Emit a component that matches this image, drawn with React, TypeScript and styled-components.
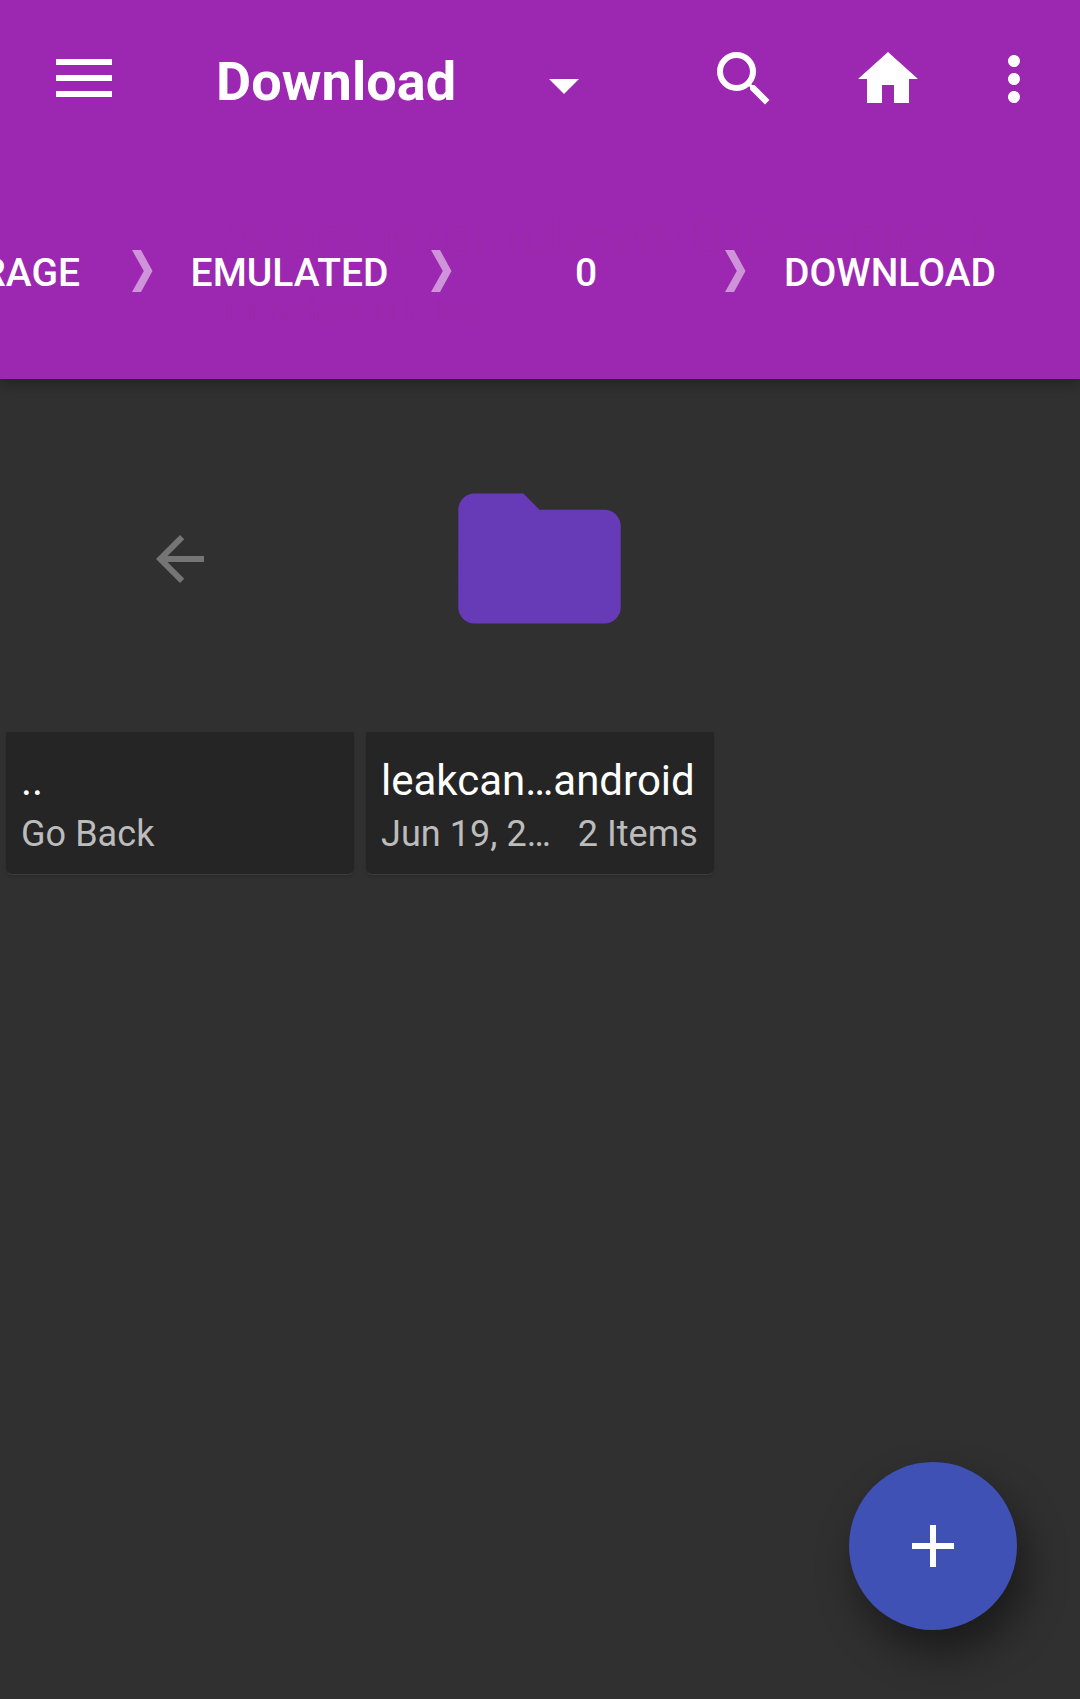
import React from "react";
import styled, { createGlobalStyle } from "styled-components";

const GlobalStyle = createGlobalStyle`
  * { box-sizing: border-box; }
  html, body { margin: 0; padding: 0; background: #303030; }
  body { font-family: Roboto, "Noto Sans", sans-serif; overflow: hidden; }
`;

const Screen = styled.div`
  position: relative;
  width: 1080px;
  height: 1699px;
  display: flex;
  flex-direction: column;
  background: #303030;
  overflow: hidden;
`;

const Header = styled.header`
  position: relative;
  z-index: 0;
  flex: none;
  height: 379px;
  display: flex;
  flex-direction: column;
  background: #9c27b0;
  color: #fff;
  box-shadow: 0 5px 12px rgba(0, 0, 0, 0.27);
`;

const Toolbar = styled.div`
  height: 158px;
  display: flex;
  align-items: center;
  padding: 0 30px 0 56px;
`;

const IconButton = styled.button<{ $gap?: number; $size?: number }>`
  width: ${(p) => p.$size ?? 72}px;
  height: 72px;
  margin: 0 0 0 ${(p) => p.$gap ?? 0}px;
  padding: 0;
  border: 0;
  background: none;
  color: inherit;
  display: flex;
  align-items: center;
  justify-content: center;
`;

const MenuGlyph = styled.svg`
  display: block;
  margin-bottom: 2px;
`;

const Picker = styled.div`
  flex: 1;
  display: flex;
  align-items: center;
  margin-left: 104px;
`;

const Title = styled.h1`
  width: 312px;
  margin: 0;
  padding-top: 5px;
  font-size: 54px;
  line-height: 64px;
  font-weight: 700;
  letter-spacing: 0.1px;
  white-space: nowrap;
`;

const Caret = styled.svg`
  margin-top: 11px;
  display: block;
`;

const Breadcrumbs = styled.nav`
  height: 168px;
  margin-top: 30px;
  display: flex;
  align-items: center;
`;

const Crumb = styled.span<{ $width: number; $align?: string; $end?: number }>`
  flex: none;
  width: ${(p) => p.$width}px;
  padding-top: 2px;
  padding-right: ${(p) => p.$end ?? 0}px;
  display: flex;
  justify-content: ${(p) => p.$align ?? "center"};
  font-size: 39px;
  line-height: 46px;
  font-weight: 500;
  white-space: nowrap;
`;

const Separator = styled.svg`
  flex: none;
  display: block;
  margin-top: -2px;
`;

const PathInfo = styled.div`
  position: absolute;
  z-index: -1;
  left: 218px;
  top: 205px;
  color: #9b28ad;
`;

const PathLine = styled.div<{ $size: number; $height: number; $gap?: number }>`
  margin-top: ${(p) => p.$gap ?? 0}px;
  font-size: ${(p) => p.$size}px;
  line-height: ${(p) => p.$height}px;
  white-space: nowrap;
`;

const Grid = styled.main`
  display: grid;
  grid-template-columns: repeat(3, 360px);
`;

const Cell = styled.article`
  padding: 6px;
  display: flex;
  flex-direction: column;
`;

const Thumb = styled.div<{ $color: string; $inset?: string }>`
  height: 347px;
  padding: ${(p) => p.$inset ?? "1px 0 0"};
  display: flex;
  align-items: center;
  justify-content: center;
  color: ${(p) => p.$color};
`;

const Caption = styled.div`
  height: 143px;
  padding: 24px 16px 0 15px;
  background: #252525;
  border-radius: 0 0 6px 6px;
  border-bottom: 1px solid #3d3d3d;
  box-shadow: 0 2px 3px rgba(0, 0, 0, 0.1);
`;

const Name = styled.div`
  font-size: 42px;
  line-height: 50px;
  color: #fff;
  white-space: nowrap;
`;

const Meta = styled.div`
  margin-top: 7px;
  display: flex;
  justify-content: space-between;
  font-size: 36px;
  line-height: 42px;
  letter-spacing: 0.05px;
  color: #bcbcbc;
  white-space: nowrap;
`;

const Fab = styled.button`
  position: absolute;
  right: 63px;
  bottom: 69px;
  width: 168px;
  height: 168px;
  padding: 0;
  border: 0;
  border-radius: 50%;
  background: #3f51b5;
  color: #fff;
  display: flex;
  align-items: center;
  justify-content: center;
  box-shadow: 9px 22px 42px rgba(0, 0, 0, 0.46);
`;

function Icon({ d, size = 72 }: { d: string; size?: number }) {
  return (
    <svg width={size} height={size} viewBox="0 0 24 24" fill="currentColor">
      <path d={d} />
    </svg>
  );
}

const SEARCH =
  "M15.5 14h-.79l-.28-.27A6.471 6.471 0 0 0 16 9.5 6.5 6.5 0 1 0 9.5 16c1.61 0 3.09-.59 4.23-1.57l.27.28v.79l5 4.99L20.49 19l-4.99-5zm-6 0C7.01 14 5 11.99 5 9.5S7.01 5 9.5 5 14 7.01 14 9.5 11.99 14 9.5 14z";
const HOME = "M10 20v-6h4v6h5v-8h3L12 3 2 12h3v8z";
const MORE =
  "M12 8c1.1 0 2-.9 2-2s-.9-2-2-2-2 .9-2 2 .9 2 2 2zm0 2c-1.1 0-2 .9-2 2s.9 2 2 2 2-.9 2-2-.9-2-2-2zm0 6c-1.1 0-2 .9-2 2s.9 2 2 2 2-.9 2-2-.9-2-2-2z";
const FOLDER =
  "M10 4H4c-1.1 0-1.99.9-1.99 2L2 18c0 1.1.9 2 2 2h16c1.1 0 2-.9 2-2V8c0-1.1-.9-2-2-2h-8l-2-2z";
const BACK = "M20 11H7.83l5.59-5.59L12 4l-8 8 8 8 1.41-1.41L7.83 13H20v-2z";
const ADD = "M19 13h-6v6h-2v-6H5v-2h6V5h2v6h6v2z";

const Chevron = () => (
  <Separator width="21" height="42" viewBox="0 0 21 42">
    <path d="M0 0H9L20.5 21L9 42H0L11.8 21Z" fill="#ce93d8" />
  </Separator>
);

export default function App() {
  return (
    <>
      <GlobalStyle />
      <Screen>
        <Header>
          <PathInfo>
            <PathLine $size={54} $height={64}>/storage/emulated/0/Download</PathLine>
            <PathLine $size={36} $height={42} $gap={22}>1 Folders 0 Files</PathLine>
          </PathInfo>
          <Toolbar>
            <IconButton $size={56} aria-label="Menu">
              <MenuGlyph width="56" height="38" viewBox="0 0 56 38" fill="currentColor">
                <path d="M0 0H56V6H0ZM0 16H56V22H0ZM0 32H56V38H0Z" />
              </MenuGlyph>
            </IconButton>
            <Picker>
              <Title>Download</Title>
              <Caret width="72" height="72" viewBox="0 0 24 24" fill="currentColor">
                <path d="M7 10l5 5 5-5z" />
              </Caret>
            </Picker>
            <IconButton aria-label="Search">
              <Icon d={SEARCH} />
            </IconButton>
            <IconButton $gap={72} aria-label="Home">
              <Icon d={HOME} />
            </IconButton>
            <IconButton $gap={54} aria-label="More">
              <Icon d={MORE} />
            </IconButton>
          </Toolbar>
          <Breadcrumbs>
            <Crumb $width={132} $align="flex-end" $end={52}>STORAGE</Crumb>
            <Chevron />
            <Crumb $width={278} $end={5}>EMULATED</Crumb>
            <Chevron />
            <Crumb $width={273} $end={5}>0</Crumb>
            <Chevron />
            <Crumb $width={289} $end={1}>DOWNLOAD</Crumb>
          </Breadcrumbs>
        </Header>
        <Grid>
          <Cell>
            <Thumb $color="#757575">
              <Icon d={BACK} />
            </Thumb>
            <Caption>
              <Name>..</Name>
              <Meta>
                <span>Go Back</span>
              </Meta>
            </Caption>
          </Cell>
          <Cell>
            <Thumb $color="#673ab7" $inset="1px 1px 2px 0">
              <Icon d={FOLDER} size={195} />
            </Thumb>
            <Caption>
              <Name>leakcan…android</Name>
              <Meta>
                <span>Jun 19, 2…</span>
                <span>2 Items</span>
              </Meta>
            </Caption>
          </Cell>
        </Grid>
        <Fab aria-label="Add">
          <Icon d={ADD} />
        </Fab>
      </Screen>
    </>
  );
}
